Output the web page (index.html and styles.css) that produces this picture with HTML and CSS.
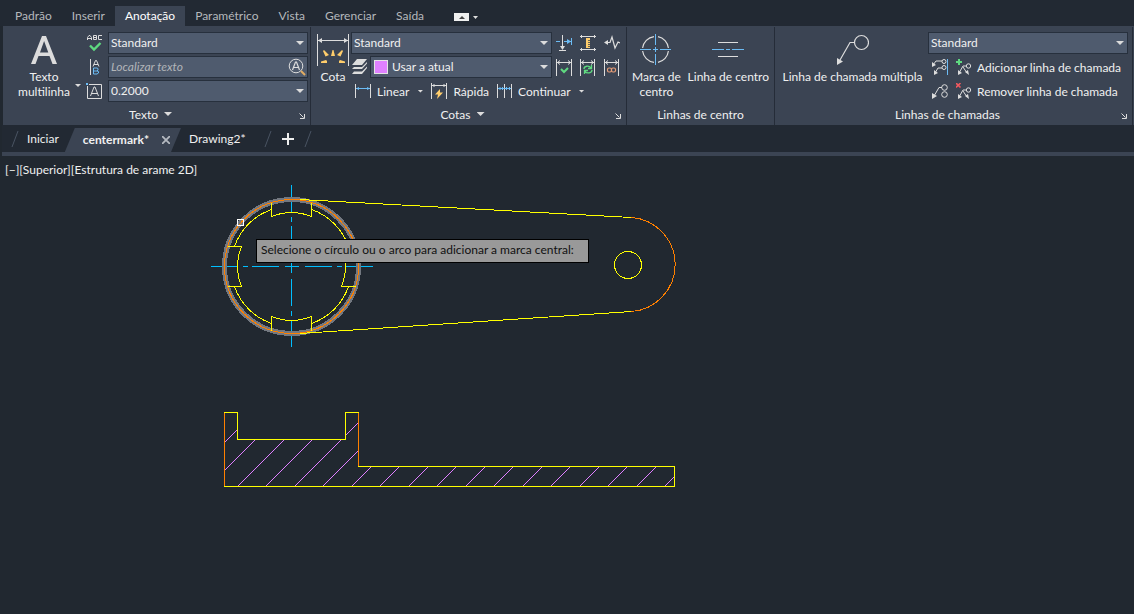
FILE: index.html
```html
<!DOCTYPE html>
<html lang="pt-BR">
<head>
<meta charset="utf-8">
<meta name="viewport" content="width=device-width, initial-scale=1">
<title>centermark</title>
<link rel="stylesheet" href="styles.css">
</head>
<body>
<nav class="menu">
  <button class="menu-tab">Padrão</button>
  <button class="menu-tab">Inserir</button>
  <button class="menu-tab active">Anotação</button>
  <button class="menu-tab">Paramétrico</button>
  <button class="menu-tab">Vista</button>
  <button class="menu-tab">Gerenciar</button>
  <button class="menu-tab">Saída</button>
  <button class="menu-toggle" aria-label="Minimizar faixa">
    <svg width="26" height="9" viewBox="0 0 26 9"><path fill="#f0f0f0" d="M0 0h15v8H0z"/><path fill="#444" d="M5 6l3-3 3 3z"/><path fill="#ddd" d="M19 3h5l-2.500 3z"/></svg>
  </button>
</nav>

<main class="ribbon">
  <section class="panel">
    <div class="panel-body">
      <button class="big big-text">
        <svg width="32" height="32" viewBox="0 0 32 32"><path fill="#dcdcdc" fill-rule="evenodd" d="M3 30L14 2h4l11 28h-4.500l-3-8h-11l-3 8zM12 18.500h8.300L16.100 7z"/></svg>
        <span>Texto<br>multilinha</span><i class="caret small corner"></i>
      </button>
      <div class="rows grow">
        <div class="row">
          <button class="tool" aria-label="Verificar ortografia"><svg width="16" height="18" viewBox="0 0 16 18"><g fill="none" stroke="#ddd"><path d="M.5 6V3.500L2 1.500h1L4.500 3.500V6M.5 4.500h4M6.500 1.500v4h3v-4h-3M6.500 3.500h3M15 1.500h-3.500v4H15"/></g><path d="M3 11.500l4 4 6.500-6.500" fill="none" stroke="#5fd980" stroke-width="2.400"/></svg></button>
          <span class="combo"><select aria-label="Estilo de texto"><option>Standard</option></select><i class="caret"></i></span>
        </div>
        <div class="row">
          <button class="tool" aria-label="Alinhar texto"><svg width="16" height="16" viewBox="0 0 16 16" fill="none"><path stroke="#ddd" d="M3.500 0v16M6 7.500l2.500-6h1l2.500 6M7 5.500h4"/><path stroke="#6cbcf5" d="M6.500 9v6h3.500l1.500-1v-1.500L10 12l1-1V9.500L10 9zM6.500 12H10"/></svg></button>
          <span class="combo"><input type="text" aria-label="Localizar texto" placeholder="Localizar texto"><svg class="find" width="18" height="18" viewBox="0 0 18 18" fill="none"><circle cx="8" cy="8" r="6.800" stroke="#ddd"/><path stroke="#ddd" stroke-width="1.200" d="M4.500 12L7.500 4h1l3 8M5.500 9.500h5"/><path stroke="#e3ad62" stroke-width="2" d="M13 13l4 4"/></svg></span>
        </div>
        <div class="row">
          <button class="tool" aria-label="Altura do texto"><svg width="17" height="17" viewBox="0 0 17 17" fill="none"><path stroke="#ddd" d="M3 1.500h12.500v14h-14V3M4.500 13l3.500-9h1l3.500 9M5.500 10.500h6"/><path fill="#6cbcf5" d="M0 0h2v2H0z"/></svg></button>
          <span class="combo"><select aria-label="Altura"><option>0.2000</option></select><i class="caret"></i></span>
        </div>
      </div>
    </div>
    <footer class="panel-title"><button class="title-button">Texto<i class="caret"></i></button><button class="launch" aria-label="Opções de texto"><svg width="6" height="6" viewBox="0 0 6 6"><path d="M.5.500l4 4M5.500 1v4.500H1" fill="none" stroke="#ddd"/></svg></button></footer>
  </section>

  <section class="panel">
    <div class="panel-body">
      <button class="big big-dim">
        <svg width="32" height="32" viewBox="0 0 32 32"><path fill="none" stroke="#ddd" d="M.5 0v32M31.500 0v32M1 6.500h30"/><path fill="#ddd" d="M1 6.500l4-2.500v5zM31 6.500L27 4v5z"/><path fill="#ffcd6b" d="M14 22l1.500-6h1l1.500 6zM8.500 22.500L6 17l1-1 5 5zM23.500 22.500l2.500-5.500-1-1-5 5zM10 29H4v-1.500l5-1.500 1 1zM22 29h6v-1.500L23 26l-1 1z"/></svg>
        <span>Cota</span>
      </button>
      <div class="dims">
        <div class="rows grow">
          <div class="row"><span class="combo"><select aria-label="Estilo de cota"><option>Standard</option></select><i class="caret"></i></span></div>
          <div class="row">
            <svg class="layers" width="17" height="16" viewBox="0 0 17 16"><path fill="#ddd" d="M6 0h10l-5 6H1zM3 8l-2 2h10l5-5.500V3l-5 5zM3 12.500L1 15h10l5-6V7.500l-5 5z"/></svg>
            <span class="combo has-swatch"><i class="swatch"></i><select aria-label="Camada da cota"><option>Usar a atual</option></select><i class="caret"></i></span>
          </div>
        </div>
        <div class="tools">
          <button class="tool" aria-label="Quebrar"><svg width="16" height="16" viewBox="0 0 16 16"><path fill="none" stroke="#ddd" d="M6.500 0v14M3 15.500h7"/><path fill="#ddd" d="M4 11h5l-2.500 4z"/><path fill="none" stroke="#6cbcf5" d="M0 6.500h4M8 6.500h7M15.500 3v7"/><path fill="#6cbcf5" d="M11 4l4 2.500L11 9z"/></svg></button>
          <button class="tool" aria-label="Ajustar espaço"><svg width="16" height="16" viewBox="0 0 16 16"><path fill="none" stroke="#ddd" d="M0 1.500h16M0 14.500h16M1.500 0v3M14.500 0v3M1.500 13v3M14.500 13v3"/><path fill="#ffcd6b" d="M6 3h4v10H6z"/><path stroke="#3b4453" d="M8 5.500h2M8 7.500h2M8 9.500h2M8 11.500h2" stroke-width=".8"/></svg></button>
          <button class="tool" aria-label="Desvio de cota"><svg width="16" height="16" viewBox="0 0 16 16"><path fill="none" stroke="#ddd" stroke-width="1.200" d="M1 7.500h5L8 2l3 11 3-6 2 1"/><path fill="#ddd" d="M0 7.500L4 5v5z"/></svg></button>
          <button class="tool" aria-label="Inspecionar"><svg width="16" height="17" viewBox="0 0 16 17" fill="none"><path stroke="#ddd" d="M.5 0v17M15.500 0v17M1 3.500h14M4 1.500l-2.500 2L4 5.500M12 1.500l2.500 2-2.500 2"/><path stroke="#5fd980" stroke-width="2" d="M5 10l3 3 4-4"/></svg></button>
          <button class="tool" aria-label="Atualizar"><svg width="16" height="17" viewBox="0 0 16 17" fill="none"><path stroke="#ddd" d="M.5 0v17M14.500 0v17M1 3.500h14M4 1.500l-2.500 2L4 5.500M11 1.500l2.500 2-2.500 2"/><path stroke="#5fd980" stroke-width="1.300" d="M4 10c0-3 5-4 7-1M11.500 6v3.500H8M12 11c0 3-5 4-7 1.500M4.500 15v-3.500H8"/></svg></button>
          <button class="tool" aria-label="Reassociar"><svg width="16" height="17" viewBox="0 0 16 17" fill="none"><path stroke="#ddd" d="M.5 0v17M14.500 0v17M1 3.500h14M4 1.500l-2.500 2L4 5.500M11 1.500l2.500 2-2.500 2"/><rect x="3.500" y="9" width="4" height="4" rx="1.500" stroke="#e89e78" stroke-width="1.200"/><rect x="7.500" y="9" width="4" height="4" rx="1.500" stroke="#e89e78" stroke-width="1.200"/></svg></button>
        </div>
        <div class="row commands">
          <button class="command"><svg width="16" height="16" viewBox="0 0 16 16"><path stroke="#ddd" d="M.5 1v14M15.500 1v14"/><path stroke="#6cbcf5" d="M1 5.500h14"/><path fill="#6cbcf5" d="M1 5.500L4 4v3zM15 5.500L12 4v3z"/></svg>Linear<i class="caret small"></i></button>
          <button class="command"><svg width="16" height="16" viewBox="0 0 16 16"><path fill="none" stroke="#ddd" d="M.5 0v16M15.500 0v16M1 2.500h14M3.500 1L2 2.500 3.500 4M12.500 1L14 2.500 12.500 4"/><path fill="#ffcd6b" d="M9 6l-5 5.500h3L6 16l6-6.500H9z"/></svg>Rápida</button>
          <button class="command"><svg width="15" height="16" viewBox="0 0 15 16"><path stroke="#ddd" d="M.5 1v14M7.500 1v14M14.500 1v14"/><path stroke="#6cbcf5" fill="none" d="M1 5.500h13M3.500 4L2 5.500 3.500 7M5 4l1.500 1.500L5 7M10 4L8.500 5.500 10 7M12 4l1.500 1.500L12 7"/></svg>Continuar<i class="caret small"></i></button>
        </div>
      </div>
    </div>
    <footer class="panel-title"><button class="title-button">Cotas<i class="caret"></i></button><button class="launch" aria-label="Opções de cotas"><svg width="6" height="6" viewBox="0 0 6 6"><path d="M.5.500l4 4M5.500 1v4.500H1" fill="none" stroke="#ddd"/></svg></button></footer>
  </section>

  <section class="panel">
    <div class="panel-body center-tools">
      <button class="big">
        <svg width="32" height="32" viewBox="0 0 32 32" fill="none"><path stroke="#ddd" stroke-width="1.200" d="M14 2.600A13 13 0 0 0 2.600 14M18 2.600A13 13 0 0 1 28.400 14M2.600 17A13 13 0 0 0 14 28.400M28.400 17A13 13 0 0 1 18 28.400"/><path stroke="#6cbcf5" d="M15.500 0v11M15.500 13v5M15.500 20v11M0 15.500h11M13 15.500h5M20 15.500h11"/></svg>
        <span>Marca de<br>centro</span>
      </button>
      <button class="big">
        <svg width="32" height="32" viewBox="0 0 32 32"><path stroke="#ddd" d="M6 8.500h20M6 22.500h20"/><path stroke="#6cbcf5" d="M0 15.500h12M14 15.500h4M20 15.500h12"/></svg>
        <span>Linha de centro</span>
      </button>
    </div>
    <footer class="panel-title plain-title"><span>Linhas de centro</span></footer>
  </section>

  <section class="panel">
    <div class="panel-body leaders">
      <button class="big big-leader">
        <svg width="32" height="32" viewBox="0 0 32 32"><path fill="none" stroke="#ddd" stroke-width="1.200" d="M3 26L13 8.500h4.500"/><circle cx="24.500" cy="8.500" r="7" fill="none" stroke="#ddd" stroke-width="1.200"/><path fill="#ddd" d="M0 24l6 3.500L0 31z"/></svg>
        <span>Linha de chamada múltipla</span>
      </button>
      <div class="rows grow">
        <div class="row"><span class="combo"><select aria-label="Estilo de chamada"><option>Standard</option></select><i class="caret"></i></span></div>
        <div class="row leader-row">
          <button class="tool" aria-label="Alinhar chamadas"><svg width="16" height="16" viewBox="0 0 16 16"><g fill="none" stroke="#ddd"><path d="M1 6l3-4h6M3 14l3-5h4"/><circle cx="12" cy="2.500" r="2"/><circle cx="12" cy="8.500" r="2"/></g><path fill="#ddd" d="M0 3l4 3-4 2zM2 11l4 3-4 2z"/><path stroke="#6cbcf5" d="M15.500 0v16"/></svg></button>
          <button class="command"><svg width="16" height="16" viewBox="0 0 16 16"><path stroke="#5fd980" stroke-width="2" d="M3 0v6M0 3h6"/><g fill="none" stroke="#ddd"><path d="M3 14l4-7h3M7 8l4 6"/><circle cx="12.500" cy="7" r="2.200"/></g><path fill="#ddd" d="M2 11l4 3-4 2zM9 13l3-2 1 5z"/></svg>Adicionar linha de chamada</button>
        </div>
        <div class="row leader-row">
          <button class="tool" aria-label="Coletar chamadas"><svg width="16" height="16" viewBox="0 0 16 16"><g fill="none" stroke="#ddd"><path d="M2 13L7 4.500h3"/><circle cx="12.500" cy="4.500" r="2.800"/><circle cx="12.500" cy="11.500" r="2.800"/></g><path fill="#ddd" d="M0 10l5 3-5 3z"/></svg></button>
          <button class="command"><svg width="16" height="16" viewBox="0 0 16 16"><path stroke="#f0595f" stroke-width="1.600" d="M0 0l4.500 4.500M4.500 0L0 4.500"/><g fill="none" stroke="#ddd"><path d="M3 14l4-7h3M7 8l4 6"/><circle cx="12.500" cy="7" r="2.200"/></g><path fill="#ddd" d="M2 11l4 3-4 2zM9 13l3-2 1 5z"/></svg>Remover linha de chamada</button>
        </div>
      </div>
    </div>
    <footer class="panel-title"><span>Linhas de chamadas</span><button class="launch" aria-label="Opções de chamadas"><svg width="6" height="6" viewBox="0 0 6 6"><path d="M.5.500l4 4M5.500 1v4.500H1" fill="none" stroke="#ddd"/></svg></button></footer>
  </section>
</main>

<nav class="files">
  <svg class="slash" width="8" height="16"><path d="M1 16L7 0" stroke="#4a5463"/></svg>
  <button class="file">Iniciar</button>
  <div class="file-active"><button class="file">centermark*</button><button class="close" aria-label="Fechar"><svg width="8" height="8" viewBox="0 0 8 8"><path d="M0 0l8 8M8 0L0 8" stroke="#b4b9c0" stroke-width="1.800"/></svg></button></div>
  <button class="file second">Drawing2*</button>
  <svg class="slash" width="8" height="16"><path d="M1 16L7 0" stroke="#4a5463"/></svg>
  <button class="plus" aria-label="Novo desenho"><svg width="12" height="12"><path d="M6 0v12M0 6h12" stroke="#eee" stroke-width="2"/></svg></button>
  <svg class="slash" width="8" height="16"><path d="M1 16L7 0" stroke="#4a5463"/></svg>
</nav>

<section class="canvas">
  <p class="view-controls">[−][Superior][Estrutura de arame 2D]</p>
  <svg class="drawing" fill="none" stroke="#ffff00" shape-rendering="crispEdges" aria-hidden="true">
    <defs><clipPath id="section"><path d="M224.500 412.500h13v27h108v-27h13v54h316v20h-450z"/></clipPath></defs>
    <g transform="translate(0 -156)">
      <g stroke="#00bfff" stroke-dasharray="27 5 5 4 27 6 14 6 27 5 5 4 27"><path d="M291.500 185v163M211 266.500h162"/></g>
      <circle cx="291.500" cy="266.500" r="67" stroke="#737880" stroke-width="5"/>
      <circle cx="291.500" cy="266.500" r="67" stroke="#ff8000"/>
      <path d="M300 199.500L631.500 217.500M300 333.500L631.500 311.500"/>
      <path stroke="#ff8000" d="M631.500 217.500A47.130 47.130 0 0 1 631.500 311.500"/>
      <circle cx="628" cy="265" r="13.500"/>
      <g transform="translate(291.500 266.500)">
        <path d="M-20-64v14A54 54 0 0 1 20-50v-14M-20 64V50A54 54 0 0 0 20 50v14M-64-20h14A54 54 0 0 0-50 20h-14M64-20H50A54 54 0 0 1 50 20h14"/>
        <path d="M-57-20A60 60 0 0 1-20-57M20-57A60 60 0 0 1 57-20M57 20A60 60 0 0 1 20 57M-20 57A60 60 0 0 1-57 20"/>
      </g>
      <path stroke="#fff" d="M237.500 219.500h6v6h-6z"/>
      <g stroke="#df80ff" shape-rendering="auto" clip-path="url(#section)"><path d="M180.500 486.500l80-80M208.500 486.500l80-80M237.500 486.500l80-80M265.500 486.500l80-80M294.500 486.500l80-80M322.500 486.500l80-80M351.500 486.500l80-80M379.500 486.500l80-80M408.500 486.500l80-80M436.500 486.500l80-80M465.500 486.500l80-80M493.500 486.500l80-80M522.500 486.500l80-80M550.500 486.500l80-80M579.500 486.500l80-80M607.500 486.500l80-80M636.500 486.500l80-80M664.500 486.500l80-80"/></g>
      <path d="M224.500 412.500h13v27h108v-27h13v54h316v20h-450z"/>
      <path stroke="#ff8000" d="M224.500 413v73M358.500 413v53"/>
    </g>
  </svg>
  <p class="prompt">Selecione o círculo ou o arco para adicionar a marca central:</p>
</section>
</body>
</html>
```

FILE: styles.css
```css
* { box-sizing: border-box; }
body {
  margin: 0;
  min-height: 100vh;
  display: flex;
  flex-direction: column;
  background: #212830;
  color: #f0f0f0;
  font: 12px/15px Lato, "Noto Sans", sans-serif;
}
button, select, input { font: inherit; color: inherit; }
button {
  display: flex;
  align-items: center;
  padding: 0;
  border: 0;
  background: none;
  white-space: nowrap;
}
svg { display: block; flex: none; }
p { margin: 0; }

.menu {
  display: flex;
  align-items: flex-end;
  height: 26px;
  padding-left: 5px;
  background: #222933;
}
.menu-tab { height: 20px; padding: 0 10px 2px; color: #b5b8bc; }
.menu-tab.active { background: #3b4453; color: #fff; }
.menu-toggle { height: 20px; margin-left: 20px; padding-top: 2px; }

.ribbon {
  display: grid;
  grid-template-columns: 308fr 316fr 148fr 358fr;
  height: 99px;
  margin-left: 3px;
  padding-right: 1px;
  background: #3b4453;
}
.panel {
  display: flex;
  flex-direction: column;
  min-width: 0;
  margin-top: 1px;
  padding-top: 5px;
  border-right: 1px solid #252c38;
}
.panel-body { display: flex; height: 71px; padding: 0 2px 0 4px; }
.rows { display: flex; flex-direction: column; gap: 2px; }
.grow { flex: 1; min-width: 0; }
.row { display: flex; align-items: center; gap: 5px; height: 22px; }
.big {
  position: relative;
  flex-direction: column;
  gap: 3px;
  height: 71px;
  padding-top: 2px;
  text-align: center;
}
.big-text { width: 79px; padding-right: 5px; }
.big-dim { width: 36px; }
.big-leader { width: 149px; padding-right: 2px; }
.panel-body.center-tools { justify-content: space-between; padding: 0 5px; }
.panel-body.leaders { padding-right: 4px; }
.tool { justify-content: center; width: 17px; height: 22px; flex: none; }

.combo {
  position: relative;
  flex: 1;
  display: flex;
  align-items: center;
  height: 22px;
  min-width: 0;
  border: 1px solid #27303d;
  background: #4f5b6e;
}
.combo select, .combo input {
  appearance: none;
  width: 100%;
  height: 20px;
  padding: 0 20px 2px 2px;
  border: 0;
  outline: 0;
  background: none;
}
.combo input::placeholder { color: #b2b5b9; font-style: italic; opacity: 1; }
.combo .caret { position: absolute; right: 3px; }
.find { position: absolute; right: 1px; }
.has-swatch { padding-left: 3px; }
.combo.has-swatch select { padding-left: 4px; }
.swatch { flex: none; width: 14px; height: 14px; border: 1px solid #e4e4e4; background: #df80ff; }
.caret {
  flex: none;
  width: 8px;
  height: 4px;
  background: #dcdcdc;
  clip-path: polygon(0 0, 100% 0, 50% 100%);
  pointer-events: none;
}
.caret.small { width: 6px; height: 3px; }
.corner { position: absolute; right: 5px; top: 52px; }

.dims {
  flex: 1;
  min-width: 0;
  display: grid;
  grid-template-columns: 1fr 72px;
  grid-template-rows: 46px 22px;
  row-gap: 2px;
}
.dims .row { gap: 2px; }
.tools {
  display: grid;
  grid-template-columns: repeat(3, 24px);
  grid-template-rows: repeat(2, 22px);
  gap: 2px 0;
  justify-items: center;
}
.dims .commands { grid-column: 1 / 3; gap: 8px; padding-left: 4px; }
.command { gap: 5px; height: 22px; }
.commands .command { gap: 6px; }
.command .caret { margin-left: 2px; }
.leader-row { gap: 8px; padding-left: 3px; }

.panel-title {
  position: relative;
  display: flex;
  align-items: center;
  justify-content: center;
  height: 22px;
  padding-right: 12px;
}
.plain-title { padding-right: 0; }
.title-button { gap: 6px; }
.launch { position: absolute; right: 5px; bottom: 6px; }

.files {
  display: flex;
  align-items: center;
  height: 31px;
  margin-left: 2px;
  padding-left: 9px;
  border-bottom: 4px solid #3b4453;
  background: #222933;
}
.file { height: 24px; padding: 0 8px; }
.file-active {
  display: flex;
  align-items: center;
  align-self: flex-end;
  height: 24px;
  margin-left: -2px;
  padding: 0 11px 1px 10px;
  background: #3b4453;
  clip-path: polygon(10px 0, 100% 0, calc(100% - 10px) 100%, 0 100%);
  font-weight: 700;
}
.close { margin-left: 5px; }
.second { margin-right: 10px; }
.plus { padding: 0 10px; }

.canvas { position: relative; flex: 1; min-height: 340px; }
.view-controls { padding: 6px 5px; }
.drawing { position: absolute; inset: 0; width: 100%; height: 100%; }
.prompt {
  position: absolute;
  left: 256px;
  top: 83px;
  padding: 2px 14px 5px 4px;
  border: 1px solid #000;
  background: #999;
  color: #111;
  white-space: nowrap;
}
```
